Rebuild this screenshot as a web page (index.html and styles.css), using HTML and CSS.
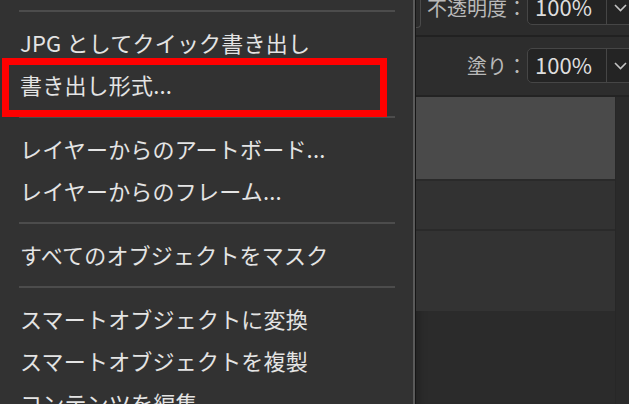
FILE: index.html
```html
<!DOCTYPE html>
<html lang="ja">
<head>
<meta charset="utf-8">
<link rel="stylesheet" href="styles.css">
</head>
<body>
<div class="screen">
  <div class="menu">
    <div class="sep"></div>
    <div class="item">JPG としてクイック書き出し</div>
    <div class="item">書き出し形式...</div>
    <div class="sep"></div>
    <div class="item">レイヤーからのアートボード...</div>
    <div class="item">レイヤーからのフレーム...</div>
    <div class="sep"></div>
    <div class="item">すべてのオブジェクトをマスク</div>
    <div class="sep"></div>
    <div class="item">スマートオブジェクトに変換</div>
    <div class="item">スマートオブジェクトを複製</div>
    <div class="item">コンテンツを編集</div>
    <div class="mark"></div>
  </div>
  <div class="panel">
    <div class="top">
      <div class="row row-top">
        <div class="peek"></div>
        <div class="label label-top">不透明度：</div>
        <div class="field">
          <div class="val">100%</div>
          <div class="chev"><svg width="13" height="8" viewBox="0 0 13 8"><polyline points="1,1 6.5,6.5 12,1" fill="none" stroke="#c4c4c4" stroke-width="1.6"/></svg></div>
        </div>
      </div>
    </div>
    <div class="fillsec">
      <div class="row">
        <div class="label label-fill">塗り：</div>
        <div class="field">
          <div class="val">100%</div>
          <div class="chev"><svg width="13" height="8" viewBox="0 0 13 8"><polyline points="1,1 6.5,6.5 12,1" fill="none" stroke="#c4c4c4" stroke-width="1.6"/></svg></div>
        </div>
      </div>
    </div>
    <div class="layers">
      <div class="list">
        <div class="layer layer-sel"></div>
        <div class="layer layer-b"></div>
        <div class="layer layer-c"></div>
      </div>
      <div class="scroll"></div>
    </div>
  </div>
</div>
</body>
</html>
```

FILE: styles.css
```css
html, body {
  margin: 0;
  padding: 0;
  background: #2b2b2b;
}
.screen {
  display: flex;
  width: 629px;
  height: 404px;
  overflow: hidden;
  font-family: "Noto Sans CJK JP", "Noto Sans", sans-serif;
}
.menu {
  position: relative;
  width: 413px;
  flex: none;
  background: #323232;
  border-right: 2px solid #5a5a5a;
}
.item {
  height: 42px;
  box-sizing: border-box;
  line-height: 40px;
  padding-bottom: 2px;
  padding-left: 20px;
  font-size: 22px;
  letter-spacing: 0.2px;
  color: #e4e4e4;
  white-space: nowrap;
}
.sep {
  height: 22px;
  display: flex;
  align-items: center;
  margin: 0 18px 0 19px;
}
.sep::before {
  content: "";
  display: block;
  width: 100%;
  height: 2px;
  background: #4c4c4c;
}
.mark {
  position: absolute;
  left: 2px;
  top: 58px;
  width: 385px;
  height: 59px;
  box-sizing: border-box;
  border: 7px solid #ff0000;
}
.panel {
  flex: 1;
  min-width: 0;
  border-left: 1px solid #161616;
  display: flex;
  flex-direction: column;
  overflow: hidden;
}
.top {
  height: 35px;
  flex: none;
  background: #2c2c2c;
  border-bottom: 2px solid #212121;
  overflow: hidden;
}
.row {
  display: flex;
  align-items: center;
  height: 35px;
}
.row-top {
  margin-top: -10px;
  align-items: stretch;
}
.row-top .label,
.row-top .field {
  align-self: center;
}
.peek {
  width: 4px;
  height: 37px;
  flex: none;
  border-right: 1px solid #4a4a4a;
  border-bottom: 1px solid #4a4a4a;
  border-radius: 0 0 4px 0;
}
.label {
  font-size: 20px;
  color: #b9b9b9;
  white-space: nowrap;
  line-height: 33px;
  flex: none;
}
.label-top {
  width: 100px;
  margin-left: 6px;
}
.label-fill {
  width: 111px;
  text-align: right;
}
.field {
  display: flex;
  flex: none;
  width: 120px;
  height: 35px;
  box-sizing: border-box;
  border: 1px solid #464646;
  border-radius: 5px;
  background: #242424;
}
.val {
  width: 79px;
  box-sizing: border-box;
  border-right: 1px solid #464646;
  padding-left: 7px;
  font-size: 22px;
  line-height: 31px;
  color: #dedede;
}
.chev {
  display: flex;
  align-items: center;
  padding-left: 7px;
  padding-top: 1px;
}
.fillsec {
  height: 60px;
  flex: none;
  box-sizing: border-box;
  padding-top: 11px;
  background: #2d2d2d;
  border-bottom: 2px solid #232323;
}
.layers {
  flex: 1;
  display: flex;
}
.list {
  width: 199px;
  flex: none;
  background: #2b2b2b;
  box-shadow: inset 10px 0 10px -8px rgba(0, 0, 0, 0.25);
}
.layer {
  border-bottom: 2px solid #2a2a2a;
}
.layer-sel {
  height: 82px;
  background: #4a4a4a;
}
.layer-b {
  height: 48px;
  background: #323232;
}
.layer-c {
  height: 80px;
  background: #333333;
  border-bottom: none;
}
.scroll {
  flex: 1;
  background: #2a2a2a;
  border-left: 1px solid #272727;
}
```
